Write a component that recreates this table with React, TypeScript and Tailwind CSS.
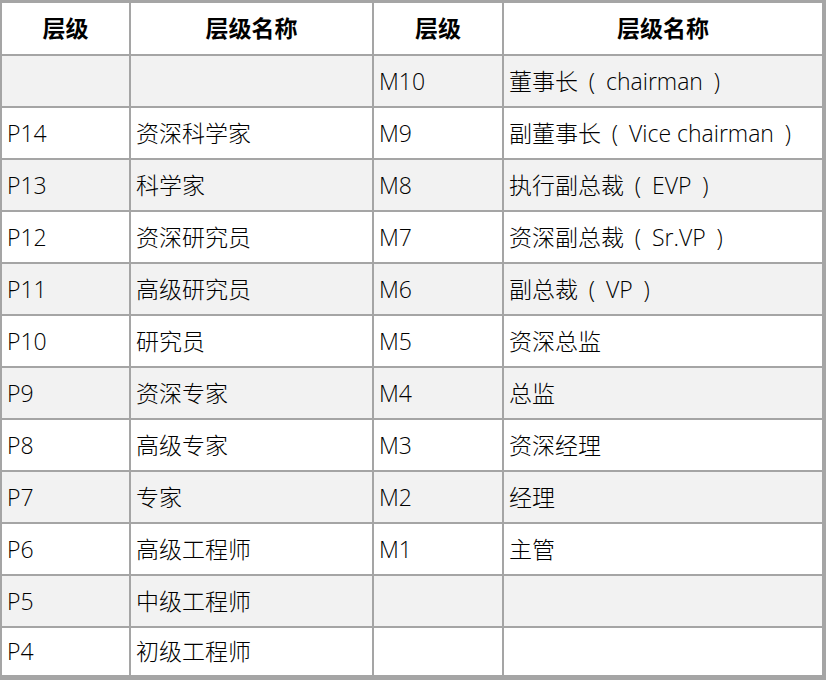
import React from "react";

function P({ c }: { c: string }) {
  return <span className="inline-block w-[28px] text-center">{c}</span>;
}

function Cell({ text }: { text: string }) {
  const m = text.match(/^(.*)（(.*)）$/);
  if (!m) return <>{text}</>;
  return (
    <>
      {m[1]}
      <P c="(" />
      {m[2]}
      <P c=")" />
    </>
  );
}

const rows: [string, string, string, string][] = [
  ["", "", "M10", "董事长（chairman）"],
  ["P14", "资深科学家", "M9", "副董事长（Vice chairman）"],
  ["P13", "科学家", "M8", "执行副总裁（EVP）"],
  ["P12", "资深研究员", "M7", "资深副总裁（Sr.VP）"],
  ["P11", "高级研究员", "M6", "副总裁（VP）"],
  ["P10", "研究员", "M5", "资深总监"],
  ["P9", "资深专家", "M4", "总监"],
  ["P8", "高级专家", "M3", "资深经理"],
  ["P7", "专家", "M2", "经理"],
  ["P6", "高级工程师", "M1", "主管"],
  ["P5", "中级工程师", "", ""],
  ["P4", "初级工程师", "", ""],
];

export default function App() {
  return (
    <div className="w-[828px] h-[680px] bg-white overflow-hidden">
      <div
        className="w-[826px] grid grid-cols-[127px_241px_128px_318px] grid-rows-[51px_repeat(11,50px)_47px] gap-[2px] bg-[#a5a5a5] pl-[2px] pt-[3px] pr-[4px] pb-[5px] text-[23px] text-black"
        style={{ fontFamily: '"Open Sans", "Noto Sans CJK SC", sans-serif' }}
      >
        {["层级", "层级名称", "层级", "层级名称"].map((h, i) => (
          <div key={"h" + i} className="bg-white flex items-center justify-center font-bold">
            {h}
          </div>
        ))}
        {rows.map((r, ri) =>
          r.map((c, ci) => (
            <div
              key={ri + "-" + ci}
              className={
                "flex items-center pl-[5px] whitespace-nowrap font-light " +
                (ri % 2 === 0 ? "bg-[#f2f2f2]" : "bg-white")
              }
            >
              <span>
                <Cell text={c} />
              </span>
            </div>
          ))
        )}
      </div>
    </div>
  );
}
